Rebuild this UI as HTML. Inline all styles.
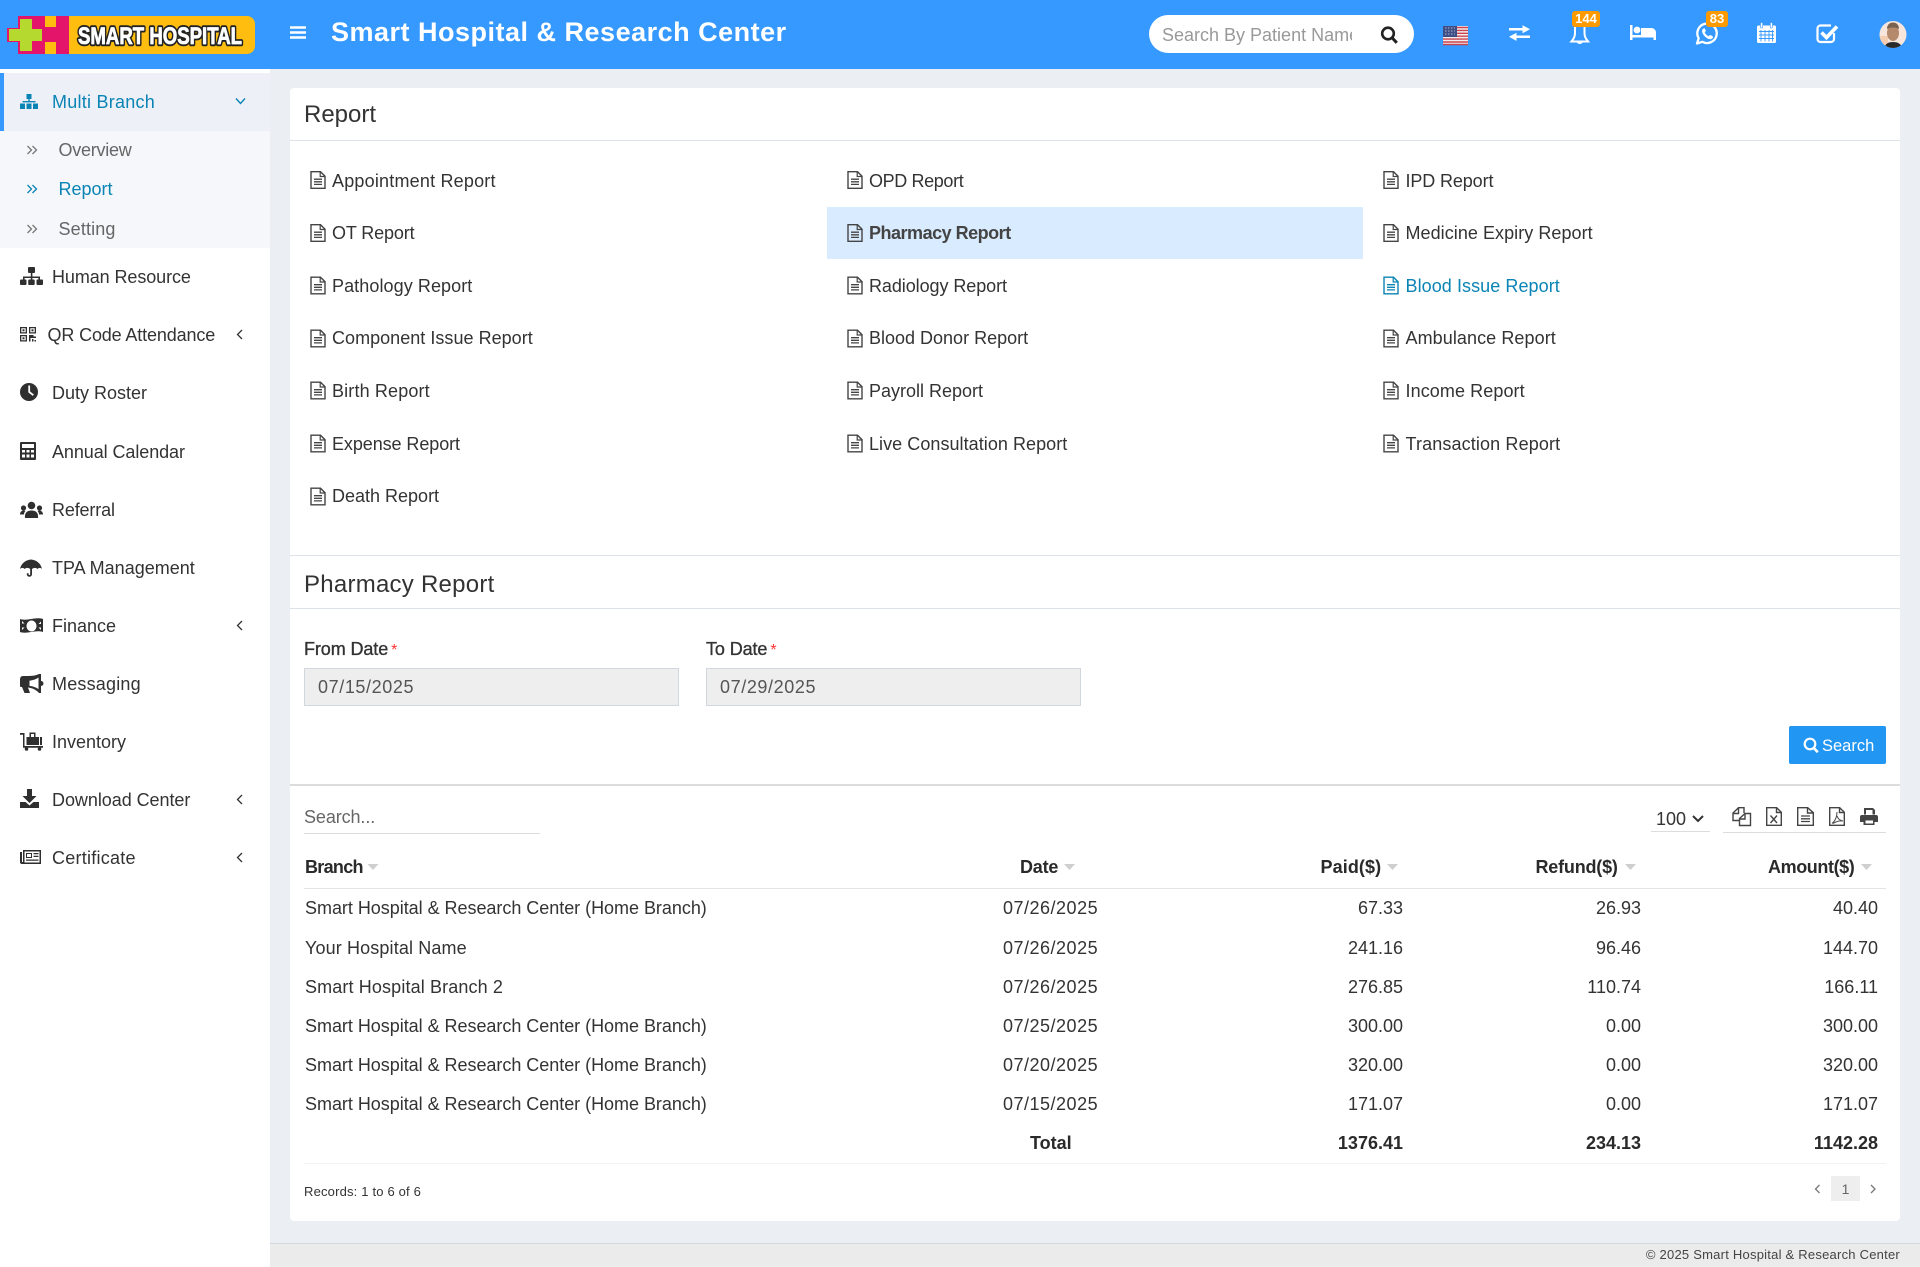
<!DOCTYPE html>
<html lang="en">
<head>
<meta charset="utf-8">
<title>Smart Hospital &amp; Research Center</title>
<style>
html,body{margin:0;padding:0;width:1920px;height:1267px;overflow:hidden;background:#ebeef3}
body{position:relative;font-family:"Liberation Sans",Arial,sans-serif;font-size:18px;color:#333}
.b{position:absolute}
.t{position:absolute;white-space:nowrap;height:24px;line-height:24px;color:#333}
.r{text-align:right}
.l{color:#0a84b5}
.g{color:#666}
.h{font-weight:bold;color:#2a2a2a}
svg{position:absolute;left:0;top:0}
</style>
</head>
<body>
<div class="b" style="left:0;top:0;width:1920px;height:69px;background:#3699ff"></div>
<div class="b" style="left:0;top:69px;width:270px;height:1198px;background:#fff"></div>
<div class="b" style="left:0;top:73px;width:270px;height:58px;background:#edf0f7"></div>
<div class="b" style="left:0;top:73px;width:4px;height:58px;background:#3699ff"></div>
<div class="b" style="left:0;top:131px;width:270px;height:117px;background:#f6f7fa"></div>
<div class="b" style="left:290px;top:88px;width:1610px;height:1133px;background:#fff;border-radius:4px"></div>
<div class="b" style="left:290px;top:140px;width:1610px;height:1px;background:#dde3e9"></div>
<div class="b" style="left:827px;top:207px;width:536px;height:52px;background:#d9ebfe"></div>
<div class="b" style="left:290px;top:555px;width:1610px;height:1px;background:#dde3e9"></div>
<div class="b" style="left:290px;top:608px;width:1610px;height:1px;background:#dde3e9"></div>
<div class="b" style="left:304px;top:668px;width:373px;height:36px;background:#eee;border:1px solid #d2d6de"></div>
<div class="b" style="left:706px;top:668px;width:373px;height:36px;background:#eee;border:1px solid #d2d6de"></div>
<div class="b" style="left:1789px;top:726px;width:97px;height:38px;background:#2196f3;border-radius:2px"></div>
<div class="b" style="left:290px;top:784px;width:1610px;height:2px;background:#dcdcdc"></div>
<div class="b" style="left:304px;top:833px;width:236px;height:1px;background:#ddd"></div>
<div class="b" style="left:1651px;top:831px;width:59px;height:1px;background:#ddd"></div>
<div class="b" style="left:1723px;top:832px;width:163px;height:1px;background:#ddd"></div>
<div class="b" style="left:304px;top:888px;width:1582px;height:1px;background:#e4e4e4"></div>
<div class="b" style="left:304px;top:1163px;width:1582px;height:1px;background:#f2f2f2"></div>
<div class="b" style="left:1831px;top:1176px;width:29px;height:25px;background:#eee"></div>
<div class="b" style="left:270px;top:1243px;width:1650px;height:23px;background:#ebebeb;border-top:1px solid #d2d6de;box-sizing:border-box"></div>
<div class="b" style="left:1149px;top:15px;width:265px;height:38px;background:#fff;border-radius:19px"></div>

<svg width="1920" height="1267" viewBox="0 0 1920 1267" xmlns="http://www.w3.org/2000/svg">
<defs>
<symbol id="f" viewBox="0 0 16 18" overflow="visible">
<path d="M1 .7h9.5L15 5.2v12.1H1z" fill="none" stroke="#444" stroke-width="1.4"/>
<path d="M10.2 .8v4.7H15" fill="none" stroke="#444" stroke-width="1.2"/>
<path d="M4 8.2h8M4 10.8h8M4 13.4h8" stroke="#444" stroke-width="1.3"/>
</symbol>
<symbol id="fb" viewBox="0 0 16 18" overflow="visible">
<path d="M1 .7h9.5L15 5.2v12.1H1z" fill="none" stroke="#0a84b5" stroke-width="1.4"/>
<path d="M10.2 .8v4.7H15" fill="none" stroke="#0a84b5" stroke-width="1.2"/>
<path d="M4 8.2h8M4 10.8h8M4 13.4h8" stroke="#0a84b5" stroke-width="1.3"/>
</symbol>
</defs>

<!-- logo -->
<path d="M18 16H69V54H18V42H7V28H18z" fill="#e5146b"/>
<path d="M69 16h178a8 8 0 0 1 8 8v22a8 8 0 0 1-8 8H69z" fill="#ffbe0f"/>
<path d="M20 19h12v10h10v12H32v10H20V41H9V29h11z" fill="#b5d92e"/>
<rect x="45" y="16" width="11" height="11" fill="#ffbe0f"/>
<rect x="45" y="42" width="11" height="12" fill="#ffbe0f"/>
<text x="78" y="44" font-family="'Liberation Sans',sans-serif" font-weight="bold" font-size="24" textLength="164" lengthAdjust="spacingAndGlyphs" fill="#fff" stroke="#222" stroke-width="4.500" stroke-linejoin="round">SMART HOSPITAL</text>
<text x="78" y="44" font-family="'Liberation Sans',sans-serif" font-weight="bold" font-size="24" textLength="164" lengthAdjust="spacingAndGlyphs" fill="#fff" stroke="#fff" stroke-width=".8" stroke-linejoin="round" aria-hidden="true">SMART HOSPITAL</text>

<!-- menu -->
<path d="M290 27.500h16M290 32.500h16M290 37.500h16" stroke="#fff" stroke-width="2.600"/>

<!-- search -->
<circle cx="1388" cy="33.500" r="5.800" fill="none" stroke="#222" stroke-width="2.600"/>
<path d="M1392.300 38l4.500 4.800" stroke="#222" stroke-width="3"/>

<!-- flag -->
<rect x="1443" y="26" width="25" height="19" fill="#f3ecec"/>
<path d="M1443 27.500h25M1443 30.400h25M1443 33.300h25M1443 36.200h25M1443 39.100h25M1443 42h25M1443 44.500h25" stroke="#c9444f" stroke-width="1.400"/>
<rect x="1443" y="26" width="14" height="11" fill="#3f4f86"/>
<path d="M1445 28h10M1445 31h10M1445 34h10" stroke="#a9b0cc" stroke-width="1" stroke-dasharray="1.500 1.500"/>

<!-- arrows -->
<path d="M1509 28h13.500v-2.800l7.500 4-7.500 4.100v-2.800H1509z" fill="#fff"/>
<path d="M1530 35.500h-13.500v-2.800l-7.500 4.100 7.500 4.100v-2.900H1530z" fill="#fff"/>

<!-- bell -->
<path d="M1575 27v6c0 4-1.600 6-3.600 8.500h16.700c-2-2.500-3.600-4.500-3.600-8.500v-6" fill="none" stroke="#fff" stroke-width="2"/>
<path d="M1577 42.500a3 2.500 0 0 0 5.500 0z" fill="#fff"/>
<rect x="1572" y="11" width="28" height="16" rx="3" fill="#fd9a00"/>

<!-- bed -->
<path d="M1630 25h2.500v10h23.500v5h-2.500v-2.500h-21V40H1630z" fill="#fff"/>
<circle cx="1637" cy="30" r="3.400" fill="#fff"/>
<path d="M1641 28h10.500a4.500 4.500 0 0 1 4.500 4.500V36h-15z" fill="#fff"/>

<!-- whatsapp -->
<path d="M1697 43.500l1.700-5.200a9.700 9.700 0 1 1 3.600 3.500z" fill="none" stroke="#fff" stroke-width="2.300" stroke-linejoin="round"/>
<path d="M1703.500 28.500c-1.500 1-1.800 2.500-1 4.500 1.200 2.800 3.500 5 6.300 6 1.800.6 3.400 0 4.200-1.500l-.3-1.300-2.700-1.300-1.300 1.300c-1.700-.6-3.300-2.200-4-4l1.200-1.200-1.200-2.700z" fill="#fff"/>
<rect x="1706" y="11" width="22" height="16" rx="3" fill="#fd9a00"/>

<!-- calendar -->
<rect x="1757" y="25.500" width="19" height="17.500" rx="1.500" fill="#fff"/>
<rect x="1760.500" y="22.500" width="2.200" height="5.500" rx="1" fill="#fff" stroke="#3699ff" stroke-width=".6"/>
<rect x="1770.300" y="22.500" width="2.200" height="5.500" rx="1" fill="#fff" stroke="#3699ff" stroke-width=".6"/>
<path d="M1759 31.500h15M1759 35h15M1759 38.500h15M1761 30v11.500M1765 30v11.500M1769 30v11.500M1772.500 30v11.500" stroke="#3699ff" stroke-width=".9"/>

<!-- check -->
<path d="M1834 33v6a3 3 0 0 1-3 3h-10.500a3 3 0 0 1-3-3V28.500a3 3 0 0 1 3-3H1831" fill="none" stroke="#fff" stroke-width="2.200"/>
<path d="M1821.500 32.500l5 5 10.500-11" fill="none" stroke="#fff" stroke-width="3.600"/>

<!-- avatar -->
<clipPath id="av"><circle cx="1893" cy="34.500" r="13.500"/></clipPath>
<g clip-path="url(#av)">
<rect x="1879" y="21" width="28" height="28" fill="#f8e6dc"/>
<rect x="1879" y="36" width="9" height="13" fill="#f5cdb0"/>
<ellipse cx="1893" cy="33" rx="6" ry="8" fill="#b58a6c"/>
<path d="M1887 29c0-4.500 2.800-6.500 6-6.500s6 2 6 6.500c-3-2-8.500-2-12 0z" fill="#7a6350"/>
<path d="M1884 49c1-5.500 4.500-7 9-7s8 1.500 10 7z" fill="#2b2a2a"/>
</g>

<!-- sidebar chevrons -->
<path d="M236 98.500l4.500 5 4.500-5" fill="none" stroke="#0a84b5" stroke-width="1.400"/>
<path d="M27.500 146l4 4-4 4M32.500 146l4 4-4 4" fill="none" stroke="#777" stroke-width="1.300"/>
<path d="M27.500 185l4 4-4 4M32.500 185l4 4-4 4" fill="none" stroke="#0a84b5" stroke-width="1.300"/>
<path d="M27.500 225l4 4-4 4M32.500 225l4 4-4 4" fill="none" stroke="#777" stroke-width="1.300"/>
<g fill="none" stroke="#333" stroke-width="1.300">
<path d="M242 330l-4.500 4.500 4.500 4.500"/>
<path d="M242 621l-4.500 4.500 4.500 4.500"/>
<path d="M242 795l-4.500 4.500 4.500 4.500"/>
<path d="M242 853l-4.500 4.500 4.500 4.500"/>
</g>

<!-- multi branch icon -->
<g fill="#0a84b5">
<rect x="26.500" y="94" width="5" height="5"/>
<rect x="28.300" y="98" width="1.400" height="4"/>
<rect x="22.500" y="101" width="13" height="1.400"/>
<rect x="20" y="103.500" width="5" height="5.500"/><rect x="26.500" y="103.500" width="5" height="5.500"/><rect x="33" y="103.500" width="5" height="5.500"/>
</g>

<!-- sidebar icons -->
<g fill="#2f2f2f">
<!-- human resource -->
<rect x="28" y="267" width="7" height="6" rx="1"/>
<rect x="30.800" y="272" width="1.600" height="5"/>
<path d="M23 279.500v-3h17v3h-1.600v-1.500h-6v1.500h-1.600v-1.500h-6.200v1.500z"/>
<rect x="20" y="279.500" width="6.500" height="5.500" rx="1"/><rect x="28.200" y="279.500" width="6.500" height="5.500" rx="1"/><rect x="36.500" y="279.500" width="6.500" height="5.500" rx="1"/>
<!-- qr -->
<path fill-rule="evenodd" d="M20 327h7v6.500h-7zM21.300 328.200v4h4.400v-4zM29 327h7v6.500h-7zM30.300 328.200v4h4.400v-4zM20 335h7v6.500h-7zM21.300 336.200v4h4.400v-4z"/>
<rect x="22.500" y="329.300" width="2" height="2"/><rect x="31.500" y="329.300" width="2" height="2"/><rect x="22.500" y="337.300" width="2" height="2"/>
<path d="M29 335h4.500v1.500H36v1.500h-5.500v3.500H29zM32 339h1.500v2.500H32zM34.500 340h1.500v1.500h-1.500z"/>
<!-- clock -->
<circle cx="29" cy="392" r="9"/>
<path d="M28.300 385.500h1.800v6l3.800 3-1.100 1.400-4.500-3.500z" fill="#fff"/>
<!-- calculator -->
<path fill-rule="evenodd" d="M21 442h14a1 1 0 0 1 1 1v16a1 1 0 0 1-1 1H21a1 1 0 0 1-1-1v-16a1 1 0 0 1 1-1zM22 444v4h12v-4zM22 450v2.500h3V450zM26.500 450v2.500h3V450zM31 450v2.500h3V450zM22 454.500v3h3v-3zM26.500 454.500v3h3v-3zM31 454.500v3h3v-3z"/>
<!-- users -->
<g transform="translate(0 10)">
<circle cx="31.500" cy="495.500" r="3.800"/>
<circle cx="23.500" cy="498" r="2.600"/>
<circle cx="39.500" cy="498" r="2.600"/>
<path d="M25 508c-.6-5 2-7.500 6.500-7.500s7.100 2.500 6.500 7.500z"/>
<path d="M20 504.500c0-2.500 1.500-4 4-4l1.500.5c-1 1-1.500 2.300-1.600 3.500zM43 504.500c0-2.500-1.500-4-4-4l-1.500.5c1 1 1.500 2.300 1.600 3.500z"/>
</g>
<!-- umbrella -->
<path d="M31 558v1.500c6 .5 10 4.500 11 9.500-1.500-1.500-3-1.500-4.500 0-1.500-1.500-3.500-1.500-5.500 0v5.200a2.600 2.600 0 0 1-5.200 0v-1h1.800v1a.8.8 0 0 0 1.600 0V569c-2-1.500-4-1.500-5.500 0-1.500-1.500-3-1.500-4.700 0 1-5 5-9 11-9.500V558z"/>
<!-- money -->
<path fill-rule="evenodd" d="M20 619c7 2.500 15-2.500 23 0v13c-8-2.500-16 2.500-23 0zM31.500 620.500a5 5.500 0 1 0 .01 0zM22 621v2.500h2.500zM41 630v-2.500h-2.500zM41 621.500v2.500h-2.500zM22 630v-2.500h2.500z"/>
<!-- bullhorn -->
<path fill-rule="evenodd" d="M39 674h2v7a2.500 2.500 0 0 1 0 5v7h-2c-3-3.500-7-5-11-5.500l2 5.500h-5.500l-2.500-6H21a1 1 0 0 1-1-1v-6.500c0-2 1-3.500 3-3.500h5c4 0 8-.5 11-2zM38.500 677.500c-2.500 1.800-5.500 2.800-9 3.200v5.200c3.500.4 6.500 1.400 9 3.200z"/>
<!-- cart -->
<path d="M20 733h4.500v13H43v1.700H23v-13h-3z"/>
<circle cx="26.500" cy="749" r="1.800"/><circle cx="39.500" cy="749" r="1.800"/>
<path fill-rule="evenodd" d="M26.500 737h3v-4.500h6v4.500h3.500v8h-12.500zM31 734v3h3v-3z"/>
<rect x="40" y="737" width="2" height="8"/>
<!-- download -->
<path d="M27 789h5v7h4.500l-7 7-7-7H27z"/>
<path d="M20 802h5.500l4 3.500 4-3.500H39v6H20z"/>
<!-- certificate -->
<path fill-rule="evenodd" d="M23 850h18v14H22a2 2 0 0 1-2-2v-10h2v10h1zM24.500 851.500v11h15v-11z"/>
<path fill-rule="evenodd" d="M26 853h6v5h-6zM27 854v3h4v-3z"/>
<path d="M33.500 853h5v1.300h-5zM33.500 855.700h5V857h-5zM26 859.500h12.500v1.200H26z"/>
</g>

<!-- report icons -->
<use href="#f" x="310" y="171" width="16" height="18"/>
<use href="#f" x="310" y="224" width="16" height="18"/>
<use href="#f" x="310" y="276.500" width="16" height="18"/>
<use href="#f" x="310" y="329.500" width="16" height="18"/>
<use href="#f" x="310" y="381.500" width="16" height="18"/>
<use href="#f" x="310" y="434.500" width="16" height="18"/>
<use href="#f" x="310" y="487.500" width="16" height="18"/>
<use href="#f" x="847" y="171" width="16" height="18"/>
<use href="#f" x="847" y="224" width="16" height="18"/>
<use href="#f" x="847" y="276.500" width="16" height="18"/>
<use href="#f" x="847" y="329.500" width="16" height="18"/>
<use href="#f" x="847" y="381.500" width="16" height="18"/>
<use href="#f" x="847" y="434.500" width="16" height="18"/>
<use href="#f" x="1383" y="171" width="16" height="18"/>
<use href="#f" x="1383" y="224" width="16" height="18"/>
<use href="#fb" x="1383" y="276.500" width="16" height="18"/>
<use href="#f" x="1383" y="329.500" width="16" height="18"/>
<use href="#f" x="1383" y="381.500" width="16" height="18"/>
<use href="#f" x="1383" y="434.500" width="16" height="18"/>

<!-- search btn icon -->
<circle cx="1810" cy="744" r="5.300" fill="none" stroke="#fff" stroke-width="2.200"/>
<path d="M1813.800 748l4 4.200" stroke="#fff" stroke-width="2.600"/>

<!-- select chevron -->
<path d="M1693 816l5 5 5-5" fill="none" stroke="#333" stroke-width="2"/>

<!-- toolbar icons -->
<g fill="none" stroke="#444" stroke-width="1.400">
<path d="M1744 813V807.700h-5.500l-5.500 5.300v7.500h6.500"/><path d="M1738.500 808v5.500h-5.500"/>
<path d="M1745 813.500h5.500v12h-11v-7l5.500-5z"/><path d="M1745 814v5h-5"/>
<path d="M1766.700 807.700h10l4.600 4.600v13h-14.600z"/><path d="M1776.500 808v4.500h4.700"/>
<path d="M1797.700 807.700h10l5.600 5v12.600h-15.600z"/><path d="M1807.500 808v5h5.700"/><path d="M1801 816h9M1801 818.800h9M1801 821.500h9" stroke-width="1.300"/>
<path d="M1829.700 807.700h10l4.600 4.600v13h-14.600z"/><path d="M1839.500 808v4.500h4.700"/>
<path d="M1837 812c0 5-2 9-5 11.500M1837 816c1 3 3 4.500 6 5M1833 823.500c3-2 7-3 10-2.500" stroke-width="1"/>
</g>
<path d="M1770.500 815.500l6.500 7.500M1777 815.500l-6.500 7.500" stroke="#444" stroke-width="1.400"/>
<g fill="#444">
<path fill-rule="evenodd" d="M1864 808h9l2 2v4.500h-2.500V810h-6.500v4.500h-2zM1862 815h14a2 2 0 0 1 2 2v5h-3.500v3h-11v-3H1860v-5a2 2 0 0 1 2-2zM1865.500 820.500v3h7.500v-3z"/>
</g>

<!-- sort carets -->
<g fill="#cfcfcf">
<path d="M367.500 864h11l-5.500 6z"/>
<path d="M1064 864h11l-5.500 6z"/>
<path d="M1387 864h11l-5.500 6z"/>
<path d="M1625 864h11l-5.500 6z"/>
<path d="M1861 864h11l-5.500 6z"/>
</g>

<!-- pagination -->
<path d="M1819.500 1185l-4 4 4 4M1871 1185l4 4-4 4" fill="none" stroke="#777" stroke-width="1.300"/>
</svg>

<!-- header text -->
<div class="t" style="left:331px;top:17px;height:30px;line-height:30px;color:#fff;font-size:27px;font-weight:bold;letter-spacing:.5px">Smart Hospital &amp; Research Center</div>
<div class="t" style="left:1162px;top:23px;width:190px;overflow:hidden;color:#999;font-size:18px">Search By Patient Name</div>
<div class="t" style="left:1572px;top:7px;width:28px;text-align:center;color:#fff;font-size:13px;font-weight:bold">144</div>
<div class="t" style="left:1706px;top:7px;width:22px;text-align:center;color:#fff;font-size:13px;font-weight:bold">83</div>

<!-- sidebar -->
<div class="t l" style="left:52px;top:90px;letter-spacing:.25px">Multi Branch</div>
<div class="t g" style="left:58.500px;top:138px;letter-spacing:-.25px">Overview</div>
<div class="t l" style="left:58.500px;top:177px">Report</div>
<div class="t g" style="left:58.500px;top:217px;letter-spacing:.15px">Setting</div>
<div class="t" style="left:52px;top:265px;letter-spacing:-.09px">Human Resource</div>
<div class="t" style="left:47.500px;top:323px;letter-spacing:-.14px">QR Code Attendance</div>
<div class="t" style="left:52px;top:381px">Duty Roster</div>
<div class="t" style="left:52px;top:440px;letter-spacing:-.08px">Annual Calendar</div>
<div class="t" style="left:52px;top:498px;letter-spacing:-.15px">Referral</div>
<div class="t" style="left:52px;top:556px">TPA Management</div>
<div class="t" style="left:52px;top:614px">Finance</div>
<div class="t" style="left:52px;top:672px;letter-spacing:.2px">Messaging</div>
<div class="t" style="left:52px;top:730px">Inventory</div>
<div class="t" style="left:52px;top:788px;letter-spacing:-.05px">Download Center</div>
<div class="t" style="left:52px;top:846px;letter-spacing:.25px">Certificate</div>

<!-- report -->
<div class="t" style="left:304px;top:103px;font-size:24px">Report</div>
<div class="t" style="left:332px;top:169px;letter-spacing:.2px">Appointment Report</div>
<div class="t" style="left:332px;top:221px;letter-spacing:-.13px">OT Report</div>
<div class="t" style="left:332px;top:274px;letter-spacing:.08px">Pathology Report</div>
<div class="t" style="left:332px;top:326px;letter-spacing:.03px">Component Issue Report</div>
<div class="t" style="left:332px;top:379px;letter-spacing:.15px">Birth Report</div>
<div class="t" style="left:332px;top:432px;letter-spacing:-.08px">Expense Report</div>
<div class="t" style="left:332px;top:484px">Death Report</div>
<div class="t" style="left:869px;top:169px;letter-spacing:-.37px">OPD Report</div>
<div class="t" style="left:869px;top:221px;font-weight:bold;color:#444;letter-spacing:-.49px">Pharmacy Report</div>
<div class="t" style="left:869px;top:274px;letter-spacing:-.07px">Radiology Report</div>
<div class="t" style="left:869px;top:326px">Blood Donor Report</div>
<div class="t" style="left:869px;top:379px">Payroll Report</div>
<div class="t" style="left:869px;top:432px;letter-spacing:.05px">Live Consultation Report</div>
<div class="t" style="left:1405.500px;top:169px;letter-spacing:-.12px">IPD Report</div>
<div class="t" style="left:1405.500px;top:221px;letter-spacing:.05px">Medicine Expiry Report</div>
<div class="t l" style="left:1405.500px;top:274px;letter-spacing:.07px">Blood Issue Report</div>
<div class="t" style="left:1405.500px;top:326px;letter-spacing:.08px">Ambulance Report</div>
<div class="t" style="left:1405.500px;top:379px;letter-spacing:.09px">Income Report</div>
<div class="t" style="left:1405.500px;top:432px;letter-spacing:.13px">Transaction Report</div>

<!-- form -->
<div class="t" style="left:304px;top:573px;font-size:24px;letter-spacing:.25px">Pharmacy Report</div>
<div class="t" style="left:304px;top:637px;-webkit-text-stroke:.35px #333;letter-spacing:-.1px">From Date<span style="color:#f33;font-size:16px;margin-left:3px;-webkit-text-stroke:0">*</span></div>
<div class="t" style="left:706px;top:637px;-webkit-text-stroke:.35px #333;letter-spacing:-.1px">To Date<span style="color:#f33;font-size:16px;margin-left:3px;-webkit-text-stroke:0">*</span></div>
<div class="t" style="left:318px;top:675px;color:#555;letter-spacing:.6px">07/15/2025</div>
<div class="t" style="left:720px;top:675px;color:#555;letter-spacing:.6px">07/29/2025</div>
<div class="t" style="left:1822px;top:734px;color:#fff;font-size:16.500px">Search</div>

<!-- table controls -->
<div class="t g" style="left:304px;top:805px;letter-spacing:-.1px">Search...</div>
<div class="t" style="left:1656px;top:807px">100</div>

<!-- table header -->
<div class="t h" style="left:305px;top:855px;letter-spacing:-.7px">Branch</div>
<div class="t h" style="left:1020px;top:855px;letter-spacing:-.2px">Date</div>
<div class="t h" style="left:1320.500px;top:855px;letter-spacing:.1px">Paid($)</div>
<div class="t h" style="left:1535.500px;top:855px;letter-spacing:-.2px">Refund($)</div>
<div class="t h" style="left:1768px;top:855px;letter-spacing:-.4px">Amount($)</div>

<!-- rows -->
<div class="t" style="left:305px;top:896px;letter-spacing:-.03px">Smart Hospital &amp; Research Center (Home Branch)</div>
<div class="t" style="left:1003px;top:896px;letter-spacing:.5px">07/26/2025</div>
<div class="t r" style="right:517px;top:896px">67.33</div>
<div class="t r" style="right:279px;top:896px">26.93</div>
<div class="t r" style="right:42px;top:896px">40.40</div>

<div class="t" style="left:305px;top:936px;letter-spacing:.13px">Your Hospital Name</div>
<div class="t" style="left:1003px;top:936px;letter-spacing:.5px">07/26/2025</div>
<div class="t r" style="right:517px;top:936px">241.16</div>
<div class="t r" style="right:279px;top:936px">96.46</div>
<div class="t r" style="right:42px;top:936px">144.70</div>

<div class="t" style="left:305px;top:975px;letter-spacing:.13px">Smart Hospital Branch 2</div>
<div class="t" style="left:1003px;top:975px;letter-spacing:.5px">07/26/2025</div>
<div class="t r" style="right:517px;top:975px">276.85</div>
<div class="t r" style="right:279px;top:975px">110.74</div>
<div class="t r" style="right:42px;top:975px">166.11</div>

<div class="t" style="left:305px;top:1014px;letter-spacing:-.03px">Smart Hospital &amp; Research Center (Home Branch)</div>
<div class="t" style="left:1003px;top:1014px;letter-spacing:.5px">07/25/2025</div>
<div class="t r" style="right:517px;top:1014px">300.00</div>
<div class="t r" style="right:279px;top:1014px">0.00</div>
<div class="t r" style="right:42px;top:1014px">300.00</div>

<div class="t" style="left:305px;top:1053px;letter-spacing:-.03px">Smart Hospital &amp; Research Center (Home Branch)</div>
<div class="t" style="left:1003px;top:1053px;letter-spacing:.5px">07/20/2025</div>
<div class="t r" style="right:517px;top:1053px">320.00</div>
<div class="t r" style="right:279px;top:1053px">0.00</div>
<div class="t r" style="right:42px;top:1053px">320.00</div>

<div class="t" style="left:305px;top:1092px;letter-spacing:-.03px">Smart Hospital &amp; Research Center (Home Branch)</div>
<div class="t" style="left:1003px;top:1092px;letter-spacing:.5px">07/15/2025</div>
<div class="t r" style="right:517px;top:1092px">171.07</div>
<div class="t r" style="right:279px;top:1092px">0.00</div>
<div class="t r" style="right:42px;top:1092px">171.07</div>

<div class="t h" style="left:1030px;top:1131px">Total</div>
<div class="t r h" style="right:517px;top:1131px">1376.41</div>
<div class="t r h" style="right:279px;top:1131px">234.13</div>
<div class="t r h" style="right:42px;top:1131px">1142.28</div>

<div class="t" style="left:304px;top:1180px;font-size:13px;letter-spacing:.18px">Records: 1 to 6 of 6</div>
<div class="t g" style="left:1831px;top:1177px;width:29px;text-align:center;font-size:14px">1</div>
<div class="t" style="right:20px;top:1243px;font-size:13px;color:#444;letter-spacing:.23px">© 2025 Smart Hospital &amp; Research Center</div>
</body>
</html>
